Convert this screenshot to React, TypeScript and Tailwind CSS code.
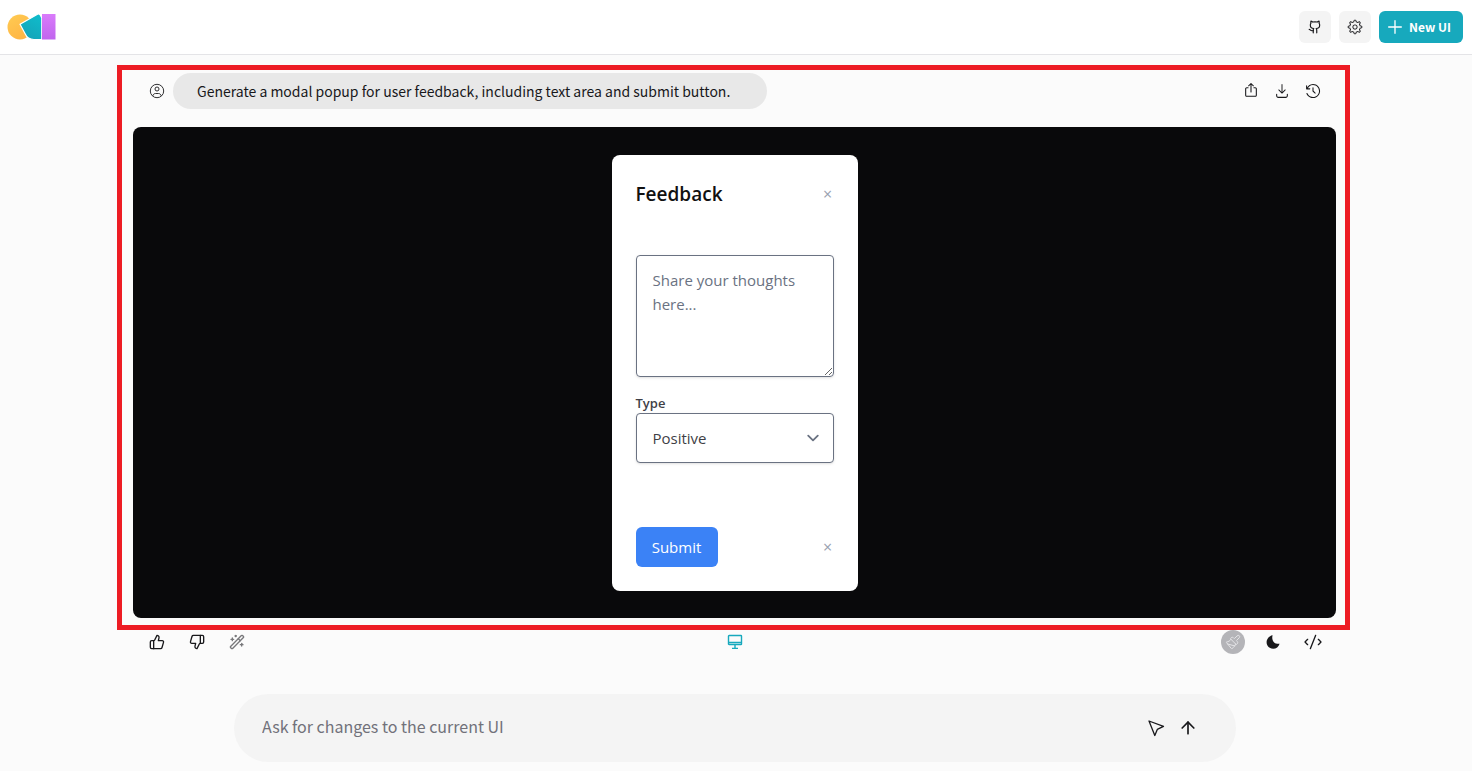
import { useState } from "react";
import type { ReactNode } from "react";
import { ArrowUp, Github, Paintbrush, ThumbsDown, ThumbsUp, WandSparkles } from "lucide-react";
import { RxCode, RxCounterClockwiseClock, RxDownload, RxGear, RxPlus, RxShare2 } from "react-icons/rx";

const MODAL_FONT = "font-['Open_Sans',sans-serif]";

type IconButtonProps = {
  label: string;
  className?: string;
  children: ReactNode;
};

function IconButton({ label, className = "", children }: IconButtonProps) {
  return (
    <button type="button" aria-label={label} className={`flex items-center justify-center ${className}`}>
      {children}
    </button>
  );
}

function Logo() {
  return (
    <svg width="50" height="28" viewBox="0 0 50 28" aria-hidden="true">
      <defs>
        <linearGradient id="sun" x1="0" y1="0" x2="0.6" y2="1">
          <stop offset="0" stopColor="#ffcb52" />
          <stop offset="1" stopColor="#ffb545" />
        </linearGradient>
        <linearGradient id="wedge" x1="0.8" y1="0" x2="0.3" y2="1">
          <stop offset="0" stopColor="#0fbccb" />
          <stop offset="1" stopColor="#15a3b8" />
        </linearGradient>
        <linearGradient id="bar" x1="0" y1="0" x2="0" y2="1">
          <stop offset="0" stopColor="#d97bfb" />
          <stop offset="1" stopColor="#c065ee" />
        </linearGradient>
      </defs>
      <circle cx="13" cy="14" r="12.5" fill="url(#sun)" />
      <path
        d="M13 11.2 30.5 1.2Q32.4.4 33.5 2.5L34.8 5V26.5H27C22 26.5 19.500 24 18 20.500Z"
        fill="url(#wedge)"
        stroke="#fff"
        strokeWidth="1.200"
        strokeLinejoin="round"
      />
      <rect x="35" y="1" width="13.500" height="25.500" fill="url(#bar)" />
    </svg>
  );
}

function UserCircle() {
  return (
    <svg width="16" height="16" viewBox="0 0 16 16" fill="none" stroke="currentColor" strokeWidth="0.9" aria-hidden="true">
      <circle cx="8" cy="8" r="6.700" />
      <circle cx="8" cy="6" r="2" />
      <path d="M3.800 12.800C4.300 11.200 5.300 10.500 6.500 10.500h3c1.200 0 2.200.7 2.700 2.300" />
    </svg>
  );
}

function Monitor() {
  return (
    <svg width="16" height="16" viewBox="0 0 16 16" fill="none" stroke="currentColor" strokeWidth="1.4" aria-hidden="true">
      <rect x="1.500" y="1.500" width="13" height="9" rx="0.6" />
      <path d="M1.500 8.500h13M8 10.500v4M5 14.400h6" />
    </svg>
  );
}

function Moon() {
  return (
    <svg width="16" height="16" viewBox="0 0 16 16" fill="currentColor" aria-hidden="true">
      <path d="M7.600 1.300C6.800 4.200 7.400 6.800 9.200 8.400c1.500 1.300 3.400 1.700 5.400 1.300C13.700 12.700 11.200 14.700 8.200 14.700 4.500 14.700 1.600 11.800 1.600 8.200 1.600 4.700 4.200 1.700 7.600 1.300Z" />
    </svg>
  );
}

function Pointer() {
  return (
    <svg width="20" height="20" viewBox="0 0 20 20" fill="none" stroke="currentColor" strokeWidth="1.3" strokeLinejoin="round" aria-hidden="true">
      <path d="M3 3 17.500 8.300 11.300 11.400 8.800 17.500Z" />
    </svg>
  );
}

function Header() {
  return (
    <header className="flex h-[55px] items-center justify-between border-b border-[#e4e4e7] bg-white pr-[9px] pl-[7px]">
      <a href="#" aria-label="Home">
        <Logo />
      </a>
      <div className="flex gap-2">
        <IconButton label="GitHub" className="size-8 rounded-md bg-[#f4f4f4]">
          <Github size={14} />
        </IconButton>
        <IconButton label="Settings" className="size-8 rounded-md bg-[#f4f4f4]">
          <RxGear size={16} />
        </IconButton>
        <button type="button" className="flex h-8 items-center gap-1 rounded-md bg-[#17a9bd] pr-3 pl-1.5 text-xs font-bold text-white">
          <RxPlus size={20} />
          New UI
        </button>
      </div>
    </header>
  );
}

function FeedbackModal() {
  const [text, setText] = useState("");
  const [type, setType] = useState("Positive");

  return (
    <div className={`w-[246px] rounded-lg bg-white p-6 text-base ${MODAL_FONT}`} role="dialog" aria-labelledby="feedback-title">
      <div className="flex h-[30px] items-center justify-between">
        <h2 id="feedback-title" className="text-[19px] font-semibold text-[#111]">
          Feedback
        </h2>
        <button type="button" aria-label="Close" className="w-3 text-base text-gray-400">
          ×
        </button>
      </div>

      <textarea
        aria-label="Feedback"
        placeholder="Share your thoughts here..."
        value={text}
        onChange={(e) => setText(e.target.value)}
        className="mt-[46px] block h-[122px] w-full rounded border border-gray-500 px-4 py-3 text-[15px] leading-6 shadow-sm placeholder:text-gray-500"
      />

      <label htmlFor="feedback-type" className="mt-4 block text-[13px] leading-5 font-semibold text-[#3f3f46]">
        Type
      </label>
      <div className="relative">
        <select
          id="feedback-type"
          value={type}
          onChange={(e) => setType(e.target.value)}
          className="block h-[50px] w-full appearance-none rounded border border-gray-500 bg-white px-4 text-[15px] text-[#3f3f46] shadow-sm"
        >
          <option>Positive</option>
          <option>Negative</option>
        </select>
        <svg
          className="pointer-events-none absolute top-[13px] right-[9px] size-6 text-gray-500"
          viewBox="0 0 20 20"
          fill="none"
          stroke="currentColor"
          strokeWidth="1.500"
          strokeLinecap="round"
          strokeLinejoin="round"
          aria-hidden="true"
        >
          <path d="m6 8 4 4 4-4" />
        </svg>
      </div>

      <div className="mt-16 flex h-10 items-center justify-between">
        <button type="button" className="h-10 w-[82px] rounded-md bg-[#3b82f6] text-[15px] text-white">
          Submit
        </button>
        <button type="button" aria-label="Dismiss" className="w-3 text-base text-gray-400">
          ×
        </button>
      </div>
    </div>
  );
}

export default function App() {
  const [prompt, setPrompt] = useState("");

  return (
    <div className="min-h-screen bg-[#fbfbfb] font-['Noto_Sans_CJK_SC',sans-serif] text-[#18181b]">
      <Header />

      <main className="pt-[10px] pr-[122px] pl-[117px]">
        <section className="border-5 border-[#ed1c24] pt-[3px] pr-[9px] pb-[7px] pl-[11px]">
          <div className="flex items-center justify-between pr-[15px] pl-4">
            <div className="flex items-center gap-2">
              <UserCircle />
              <p className="min-w-[594px] rounded-full bg-[#e8e8e8] px-6 py-1.5 text-sm leading-6">
                Generate a modal popup for user feedback, including text area and submit button.
              </p>
            </div>
            <div className="flex gap-[15px]">
              <IconButton label="Share">
                <RxShare2 size={16} />
              </IconButton>
              <IconButton label="Download">
                <RxDownload size={16} />
              </IconButton>
              <IconButton label="History">
                <RxCounterClockwiseClock size={16} />
              </IconButton>
            </div>
          </div>

          <div className="mt-[18px] flex justify-center rounded-lg bg-[#09090b] pt-7 pb-[27px]">
            <FeedbackModal />
          </div>
        </section>

        <div className="pr-[25px] pl-7">
          <div className="grid grid-cols-3">
            <div className="flex gap-4">
              <IconButton label="Good result" className="size-6">
                <ThumbsUp size={16} />
              </IconButton>
              <IconButton label="Bad result" className="size-6">
                <ThumbsDown size={16} />
              </IconButton>
              <IconButton label="Improve" className="size-6 text-[#77777a]">
                <WandSparkles size={16} />
              </IconButton>
            </div>
            <IconButton label="Desktop view" className="size-6 justify-self-center text-[#17a9bd]">
              <Monitor />
            </IconButton>
            <div className="flex justify-end gap-4">
              <IconButton label="Theme" className="size-6 rounded-full bg-[#b4b4b8] text-[#e4e4e7]">
                <Paintbrush size={16} strokeWidth={1.5} />
              </IconButton>
              <IconButton label="Dark mode" className="size-6">
                <Moon />
              </IconButton>
              <IconButton label="View code" className="size-6">
                <RxCode size={20} />
              </IconButton>
            </div>
          </div>

          <form
            onSubmit={(e) => e.preventDefault()}
            className="mx-auto mt-10 flex h-[68px] max-w-[1002px] items-center gap-2 rounded-full bg-[#f4f4f4] pr-9 pl-7"
          >
            <input
              aria-label="Ask for changes to the current UI"
              placeholder="Ask for changes to the current UI"
              value={prompt}
              onChange={(e) => setPrompt(e.target.value)}
              className="h-10 min-w-0 flex-1 bg-transparent pb-1 text-base outline-none placeholder:text-[#71717a]"
            />
            <IconButton label="Select element" className="size-6">
              <Pointer />
            </IconButton>
            <button type="submit" aria-label="Send" className="flex size-6 items-center justify-center">
              <ArrowUp size={20} />
            </button>
          </form>
        </div>
      </main>
    </div>
  );
}
